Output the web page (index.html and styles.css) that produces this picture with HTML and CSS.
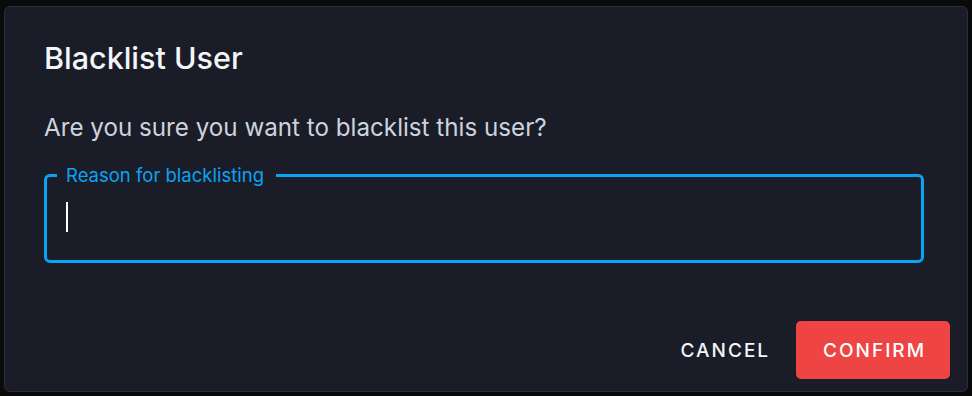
FILE: index.html
```html
<!DOCTYPE html>
<html lang="en">
<head>
    <meta charset="UTF-8">
    <title>Blacklist User</title>
    <link rel="stylesheet" href="styles.css">
</head>
<body>

<div class="dialog">
    <h2 class="dialog-title">Blacklist User</h2>

    <div class="dialog-content">
        <p class="dialog-text">Are you sure you want to blacklist this user?</p>

        <fieldset class="reason-field">
            <legend>Reason for blacklisting</legend>
            <span class="caret"></span>
        </fieldset>
    </div>

    <div class="dialog-actions">
        <button class="cancel-button">Cancel</button>
        <button class="confirm-button">Confirm</button>
    </div>
</div>

</body>
</html>
```

FILE: styles.css
```css
html, body {
    margin: 0;
    height: 100%;
}
body {
    font-family: Inter, "Noto Sans", sans-serif;
    background-color: #0a0a0b;
    padding: 6px 4px 4px 4px;
    box-sizing: border-box;
}
.dialog {
    height: 386px;
    box-sizing: border-box;
    background-color: #1a1d28;
    border: 1px solid #2b2f3b;
    border-radius: 6px;
    display: flex;
    flex-direction: column;
}
.dialog-title {
    margin: 0;
    padding: 33px 39px 0 39px;
    font-size: 30.5px;
    font-weight: 500;
    line-height: 36px;
    color: #f3f5f8;
}
.dialog-content {
    padding: 0 43px 0 39px;
}
.dialog-text {
    margin: 37px 0 0 0;
    font-size: 24.2px;
    line-height: 30px;
    color: #cdd3dd;
}
.reason-field {
    margin: 22px 0 0 0;
    padding: 0 19px;
    height: 98px;
    box-sizing: border-box;
    border: 3px solid #0ba3f2;
    border-radius: 6px;
}
.reason-field legend {
    margin-left: -9px;
    padding: 0 12px 0 9px;
    font-size: 18.5px;
    line-height: 20px;
    color: #0ba3f2;
}
.caret {
    display: block;
    width: 2px;
    height: 30px;
    margin-top: 17px;
    background-color: #ffffff;
}
.dialog-actions {
    margin-top: auto;
    display: flex;
    justify-content: flex-end;
    align-items: center;
    gap: 12px;
    padding: 0 17px 12px 0;
}
.dialog-actions button {
    font-family: Inter, "Noto Sans", sans-serif;
    font-size: 19px;
    font-weight: 500;
    letter-spacing: 2px;
    text-transform: uppercase;
    border: none;
    border-radius: 5px;
    height: 58px;
    cursor: pointer;
}
.cancel-button {
    padding: 0 14px 0 16px;
    background: none;
    color: #f3f5f8;
}
.confirm-button {
    padding: 0 24px 0 27px;
    background-color: #ef4444;
    color: #ffffff;
}
```
